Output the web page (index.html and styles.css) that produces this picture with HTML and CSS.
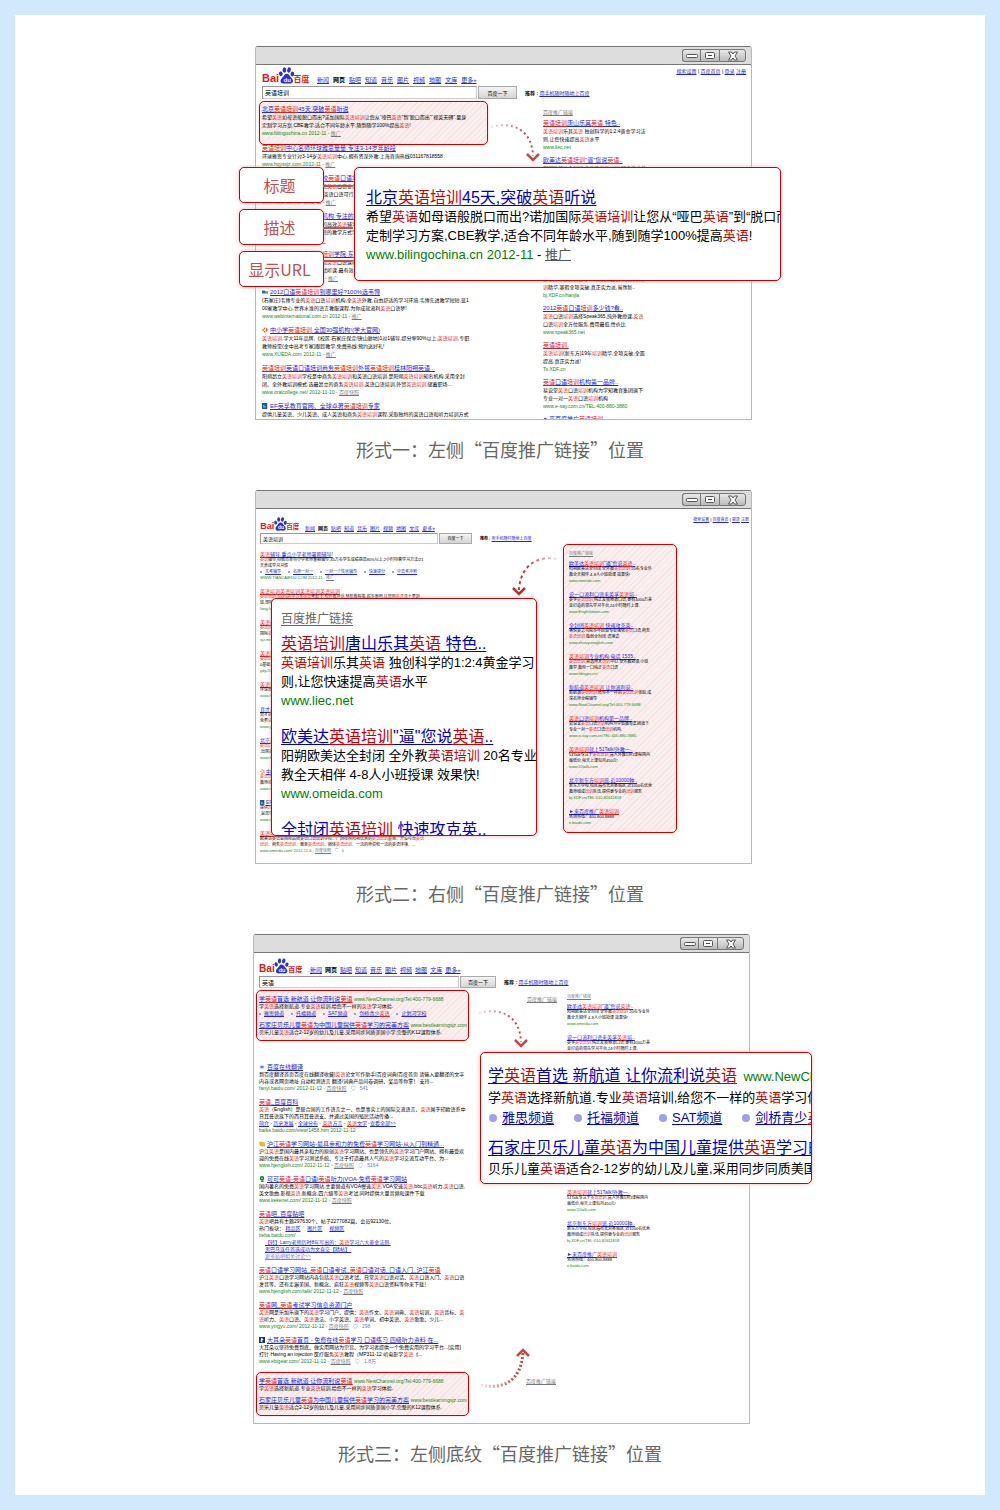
FILE: index.html
```html
<!DOCTYPE html>
<html lang="zh-CN">
<head>
<meta charset="utf-8">
<title>百度推广链接位置</title>
<link rel="stylesheet" href="styles.css">
</head>
<body>
<svg class="defs" aria-hidden="true">
  <defs>
    <symbol id="logo" viewBox="0 0 48 17">
      <text x="0" y="15" class="logo-latin">Bai</text>
      <g fill="#2a30d8">
        <ellipse cx="18.800" cy="6.800" rx="1.800" ry="2.400" transform="rotate(-15 18.8 6.8)"/>
        <ellipse cx="22.400" cy="3" rx="1.800" ry="2.700"/>
        <ellipse cx="27" cy="3" rx="1.800" ry="2.700" transform="rotate(12 27 3)"/>
        <ellipse cx="30.400" cy="7" rx="1.800" ry="2.400" transform="rotate(15 30.4 7)"/>
        <path d="M24.700 6.800c2.200 0 3 2.200 4.200 3.600 1.400 1.400 2.400 2.300 2 4.200-.4 1.700-1.800 2.100-3.300 2-2-.1-3.800-.1-5.800 0-1.500.1-2.900-.4-3.200-2.100-.3-1.900.9-2.800 2.100-4.200 1.300-1.300 1.900-3.500 4-3.500z"/>
      </g>
      <text x="21.500" y="15" class="logo-du">du</text>
      <text x="31.500" y="15" class="logo-han">百度</text>
    </symbol>
    <symbol id="win-min" viewBox="0 0 14 8"><rect x="1.500" y="2.500" width="11" height="3" rx="1" fill="#fff" stroke="#555"/></symbol>
    <symbol id="win-max" viewBox="0 0 14 8"><rect x="2.500" y=".5" width="9" height="6" rx="1" fill="#fff" stroke="#555"/><path d="M5 3.500h4" stroke="#444"/></symbol>
    <symbol id="win-close" viewBox="0 0 14 10"><path d="M2.500 1h3L7 3l1.500-2h3L9 5l2.500 4h-3L7 7 5.500 9h-3L5 5z" fill="#fff" stroke="#555"/></symbol>
    <linearGradient id="fade-right" x1="0" x2="1"><stop offset="0" stop-color="#c04848" stop-opacity=".15"/><stop offset=".8" stop-color="#c04848"/></linearGradient>
    <linearGradient id="fade-left" x1="1" x2="0"><stop offset="0" stop-color="#b84040" stop-opacity=".15"/><stop offset=".8" stop-color="#b84040"/></linearGradient>
    <symbol id="arrow-down" viewBox="0 0 52 42">
      <path d="M2 5C24-1 43 8 44 34" fill="none" stroke="url(#fade-right)" stroke-width="2" stroke-dasharray="2 3"/>
      <path d="M38 32l6 6 6-6" fill="none" stroke="#c04848" stroke-width="2.500"/>
    </symbol>
    <symbol id="arrow-down-left" viewBox="0 0 52 42">
      <path d="M46 3C24-1 9 12 8 34" fill="none" stroke="url(#fade-left)" stroke-width="2" stroke-dasharray="3 3"/>
      <path d="M2 32l6 6 6-6" fill="none" stroke="#b03030" stroke-width="2.500"/>
    </symbol>
    <symbol id="arrow-up" viewBox="0 0 52 42">
      <path d="M2 38c22 5 40-4 42-32" fill="none" stroke="url(#fade-right)" stroke-width="3" stroke-dasharray="2 2"/>
      <path d="M38 9l6-6 6 6" fill="none" stroke="#c04848" stroke-width="2.500"/>
    </symbol>
  </defs>
</svg>

<main class="page">

<figure class="figure">
  <div class="scene">
    <section class="window mini mini-large">
      <header class="titlebar">
        <button aria-label="最小化"><svg><use href="#win-min"/></svg></button>
        <button aria-label="最大化"><svg><use href="#win-max"/></svg></button>
        <button aria-label="关闭"><svg><use href="#win-close"/></svg></button>
      </header>
      <div class="site-head">
        <svg class="logo" role="img" aria-label="Baidu百度"><use href="#logo"/></svg>
        <nav><a href="#">新闻</a><b>网页</b><a href="#">贴吧</a><a href="#">知道</a><a href="#">音乐</a><a href="#">图片</a><a href="#">视频</a><a href="#">地图</a><a href="#">文库</a><a href="#">更多»</a></nav>
        <p class="account"><a href="#">搜索设置</a> | <a href="#">百度首页</a> | <a href="#">登录</a> <a href="#">注册</a></p>
      </div>
      <form class="search"><input type="text" aria-label="搜索" value="英语培训"><button type="button">百度一下</button><p><b>推荐 : </b><a href="#">用手机随时随地上百度</a></p></form>
      <div class="columns">
        <div class="results">
          <div class="marked">
            <article><h3><a href="#">北京<em>英语培训</em>45天,突破<em>英语</em>听说</a></h3>
            <p>希望<em>英语</em>如母语般脱口而出?诺加国际<em>英语培训</em>让您从“哑巴<em>英语</em>”到“脱口而出”“视英无碍”.量身<br>定制学习方案,CBE教学,适合不同年龄水平,随到随学100%提高<em>英语</em>!</p>
            <cite>www.bilingochina.cn 2012-11 - <u>推广</u></cite></article>
          </div>
          <article><h3><a href="#"><em>英语培训</em>中心名师环球雅思量量.专注3-14岁年龄段</a></h3>
          <p>环球雅思专业针对3-14岁<em>英语培训</em>中心,拥有资深外教.上海咨询热线031167818558</p>
          <cite>www.hqyssjz.com 2012-11 - <u>推广</u></cite></article>
          <article><h3><a href="#">唐山新东方<em>英语培训</em>学校<em>英语</em>口语培训班</a></h3>
          <p>唐山新东方学校专业英语口语<em>英语</em>口语业务英语培训,小班授课<br>名师教学,轻松愉快学习地道英语口语可行试听</p>
          <cite>www.tsxdf.com.cn 2012-11 - <u>推广</u></cite></article>
          <article><h3><a href="#">石家庄最好的<em>英语培训</em>机构.专注的教育专家</a></h3>
          <p>专业口语<em>培训</em>机构小班授课的高效<em>英语</em>辅导最全面课程,全外教<br>教学零基础可以学好英语口语的教学方式学生好</p>
          <cite>www.yysjz.cn 2012-11 - <u>推广</u></cite></article>
          <article><h3><a href="#">学<em>英语</em>就来新东方<em>英语培训</em>学院.东方实力</a></h3>
          <p>新东方英语专家团队精心打造<em>英语</em>口语课程<em>英语培训</em>名师<br>授课全程跟踪<em>英语培训</em>免费试听课,最有效提高</p>
          <cite>www.sjzxdf.com.cn 2012-11 - <u>推广</u></cite></article>
          <article><h3><svg class="fav" viewBox="0 0 8 8"><path d="M0 2h4v4H0z" fill="#2a70a0"/><path d="M4 3h4v3H4z" fill="#5aa040"/></svg><a href="#">2012口语<em>英语培训</em>到哪里好?100%选韦博</a></h3>
          <p>(石家庄)韦博专业的<em>英语</em>口语<em>培训</em>机构,全<em>英语</em>外教,自由舒适的学习环境,韦博先进教学短短,蓝1<br>00家教学中心,世界水准的语言教服课程,为你成就流利<em>英语</em>口语梦!</p>
          <cite>www.webinternational.com.cn 2012-11 - <u>推广</u></cite></article>
          <article><h3><svg class="fav" viewBox="0 0 8 8"><circle cx="4" cy="4" r="2.500" fill="none" stroke="#e86030" stroke-width="2" stroke-dasharray="2 1"/></svg><a href="#">中小学<em>英语培训</em>,全国30强机构!(学大官网)</a></h3>
          <p><em>英语培训</em>,学大11年品牌,《校区:石家庄保定/唐山廊坊)1对1辅导,提分率90%以上,<em>英语培训</em>,专职<br>教师按需(金中高考专家)跟踪教学,免费热线:预约送好礼!</p>
          <cite>www.XUEDA.com 2012-11 - <u>推广</u></cite></article>
          <article><h3><a href="#"><em>英语培训</em>英语口语培训商务<em>英语培训</em>外贸<em>英语培训</em>桂林阳朔英语...</a></h3>
          <p>阳朔昂立<em>英语培训</em>学校是中商务<em>英语培训</em>和英语口语培训.是阳朔<em>英语培训</em>知名机构.采用全封<br>闭、全外教培训模式.选最昂立的商务<em>英语培训</em>,英语口语培训,外贸<em>英语培训</em>,储蓄职场...</p>
          <cite>www.oralcollege.net/ 2012-11-10 - <u>百度快照</u></cite></article>
          <article><h3><svg class="fav" viewBox="0 0 8 8"><rect width="7" height="8" fill="#2050b0"/><path d="M1 2l5 3-4 2z" fill="#50c0a0"/></svg><a href="#">EF英孚教育官网、全球卓著<em>英语培训</em>专家</a></h3>
          <p>提供儿童英语、少儿英语、成人英语和商务<em>英语培训</em>课程,采取独特的英语口语和听力培训方式<br>,是您学习英语的首选<em>英语培训</em>机构、欢迎您到EF英孚教育网站寻找免费试听课程.</p></article>
        </div>
        <aside class="ads">
          <p class="ads-label"><a href="#">百度推广链接</a></p>
          <article><h3><a href="#"><em>英语培训</em>唐山乐其<em>英语</em> 特色..</a></h3><p><em>英语培训</em>乐其<em>英语</em> 独创科学的1:2:4黄金学习法<br>则,让您快速提高<em>英语</em>水平</p><cite>www.liec.net</cite></article>
          <article><h3><a href="#">欧美达<em>英语培训</em>"逼"您说<em>英语</em>..</a></h3><p>阳朔欧美达全封闭 全外教<em>英语培训</em> 20名专业外<br>教全天相伴 4-8人小班授课 效果快!</p><cite>www.omeida.com</cite></article>
          <article><h3><a href="#">全封闭<em>英语培训</em> 快速攻克英..</a></h3><p>睿悦英之书院多年经验专业强化<em>英语</em>口语,商务<br><em>英语培训</em>,独创全封闭.语境式</p><cite>www.zhuoyuenglish.com</cite></article>
          <article><h3><a href="#"><em>英语培训</em>专业机构.电话 1535..</a></h3><p><em>英语培训</em>,首选师大<em>培训</em>中心.全外教授课,小班<br>教学,教你一口纯正<em>英语</em>口语</p><cite>www.hbsypx.cn/</cite></article>
          <article><h3><a href="#">新东方<em>英语培训</em> 轻松学<em>英语</em>..</a></h3><p>新东方专业<em>英语</em>辅导19年培训,口语听力<em>英语培</em><br><em>训</em>精华,寒假全项突破,真正实力派,当然新..</p><cite>bj.XDF.cn/hanjia</cite></article>
          <article><h3><a href="#">2012<em>英语</em>口语<em>培训</em>多少钱?看..</a></h3><p><em>英语</em>口语<em>培训</em>选择Speak365,纯外教授课,<em>英语</em><br>口语<em>培训</em>全方位服务,费用最低,性价比</p><cite>www.speak365.net</cite></article>
          <article><h3><a href="#"><em>英语培训</em>.</a></h3><p><em>英语培训</em>(新东方)19年<em>培训</em>精华,全项突破,全面<br>提高,真正实力派!</p><cite>Ts.XDF.cn</cite></article>
          <article><h3><a href="#"><em>英语</em>口语<em>培训</em>机构第一品牌..</a></h3><p>易说堂<em>英语</em>口语<em>培训</em>机构为学知教育集团旗下<br>专业一对一<em>英语</em>口语<em>培训</em>机构</p><cite>www.e-say.com.cn/TEL:400-880-3880</cite></article>
          <article><h3><a href="#">►来百度推广<em>英语培训</em></a></h3></article>
        </aside>
      </div>
    </section>
    <ul class="tags"><li>标题</li><li>描述</li><li>显示URL</li></ul>
    <svg class="arrow arrow-one" aria-hidden="true"><use href="#arrow-down"/></svg>
    <div class="callout callout-one">
      <h3><a href="#">北京<em>英语培训</em>45天,突破<em>英语</em>听说</a></h3>
      <p>希望<em>英语</em>如母语般脱口而出?诺加国际<em>英语培训</em>让您从“哑巴<em>英语</em>”到“脱口而出”</p>
      <p>定制学习方案,CBE教学,适合不同年龄水平,随到随学100%提高<em>英语</em>!</p>
      <cite>www.bilingochina.cn 2012-11 <span>- <u>推广</u></span></cite>
    </div>
  </div>
  <figcaption>形式一：左侧“百度推广链接”位置</figcaption>
</figure>

<figure class="figure">
  <div class="scene">
    <section class="window mini mini-small">
      <header class="titlebar">
        <button aria-label="最小化"><svg><use href="#win-min"/></svg></button>
        <button aria-label="最大化"><svg><use href="#win-max"/></svg></button>
        <button aria-label="关闭"><svg><use href="#win-close"/></svg></button>
      </header>
      <div class="site-head">
        <svg class="logo" role="img" aria-label="Baidu百度"><use href="#logo"/></svg>
        <nav><a href="#">新闻</a><b>网页</b><a href="#">贴吧</a><a href="#">知道</a><a href="#">音乐</a><a href="#">图片</a><a href="#">视频</a><a href="#">地图</a><a href="#">文库</a><a href="#">更多»</a></nav>
        <p class="account"><a href="#">搜索设置</a> | <a href="#">百度首页</a> | <a href="#">登录</a> <a href="#">注册</a></p>
      </div>
      <form class="search"><input type="text" aria-label="搜索" value="英语培训"><button type="button">百度一下</button><p><b>推荐 : </b><a href="#">用手机随时随地上百度</a></p></form>
      <div class="columns">
        <div class="results">
          <article><h3><a href="#"><em>英语</em>辅导,重点小学老师暑期辅导!</a></h3>
          <p><em>英语</em>辅导,特聘市重点小学老师暑期辅导,35万名学生成绩提高80%以上,2小时特惠学习方法/21<br>天养成学习习惯</p>
          <p class="sublinks"><a href="#">艺考辅导</a><a href="#">名师一对一</a><a href="#">一对一个性化辅导</a><a href="#">快速提分</a><a href="#">中高考冲刺</a></p>
          <cite>WWW.TIANCAIEDU.COM 2012-11 - <u>推广</u></cite></article>
          <article><h3><a href="#"><em>英语培训英语培训英语培训英语培训</em></a></h3>
          <p><em>英语培训</em>,100%的学员亲<em>英语</em>零起步,和外教对话,轻松教程策,超多案例,让您用<em>英语</em>流十里到<br>班,想听就听,免费试听</p><cite>lang.hb.cn 2012-11</cite></article>
          <article><h3><a href="#"><em>英语</em>口语培训机构</a></h3><p><em>英语培训</em>首选名师课程<br>国际<em>英语</em>教学</p><cite>sjz.meten.com</cite></article>
          <article><h3><a href="#"><em>英语培训</em>学校</a></h3><p><em>英语培训</em>名师授课<br>0基础英语</p><cite>ydy.20on.com</cite></article>
          <article><h3><a href="#"><em>英语培训</em></a></h3><p>环球雅思英语</p><cite>www.hqys.com</cite></article>
          <article><h3><a href="#">育才<em>英语</em></a></h3><p>育才英语培训学校<br>免费试听课</p><cite>www.yucai.com</cite></article>
          <article><h3><a href="#">北京<em>英语培训</em></a></h3><p><em>英语</em>口语培训<br>,出国英语</p><cite>www.bjyy.com</cite></article>
          <article><h3><svg class="fav" viewBox="0 0 8 8"><circle cx="4" cy="4" r="2.500" fill="none" stroke="#e88030" stroke-width="2" stroke-dasharray="2 1"/></svg><a href="#">中小学<em>英语</em></a></h3><p><em>英语培训</em>学大<br>教师按需</p><cite>www.xueda.com</cite></article>
          <article><h3><svg class="fav" viewBox="0 0 8 8"><rect width="7" height="8" fill="#2050b0"/><path d="M1 2l5 3-4 2z" fill="#50c0a0"/></svg><a href="#">EF英孚教育</a></h3><p>提供儿童英语<br>,是您学习</p><cite>www.ef.com.cn</cite></article>
          <article><h3><a href="#"><em>英语培训</em>英语口语培训商务<em>英语培训</em>外贸<em>英语培训</em>阳朔<em>英语培训</em>...</a></h3>
          <p>欧美达英语是国际品牌英语口语培训学校、广西桂林阳朔优秀的<em>英语培训</em>基地、开设综合<em>英语</em><br><em>培训</em>、商务<em>英语培训</em>、雅思<em>英语培训</em>、团体<em>英语培训</em>、一流的师资和一流的英语环境、...</p>
          <cite>www.omeida.com/ 2012-11-6 - <u>百度快照</u> &nbsp; <span class="like">♡ &nbsp; 6</span></cite></article>
        </div>
        <aside class="ads marked">
          <p class="ads-label"><a href="#">百度推广链接</a></p>
          <article><h3><a href="#">欧美达<em>英语培训</em>"逼"您说<em>英语</em>..</a></h3><p>阳朔欧美达全封闭 全外教<em>英语培训</em> 20名专业外<br>教全天相伴 4-8人小班授课 效果快!</p><cite>www.omeida.com</cite></article>
          <article><h3><a href="#">说一口流利口语来英孚<em>英语</em>培..</a></h3><p>英孚<em>英语培训</em>,纯正发展地道口语,更有4000万美<br>金打造的领先学习平台,24小时随时上课.</p><cite>www.Englishtown.com</cite></article>
          <article><h3><a href="#">全封闭<em>英语培训</em> 快速攻克英..</a></h3><p>睿悦英之书院多年经验专业强化<em>英语</em>口语,商务<br><em>英语培训</em>,独创全封闭.语境式</p><cite>www.zhuoyuenglish.com</cite></article>
          <article><h3><a href="#"><em>英语培训</em>专业机构.电话 1535..</a></h3><p><em>英语培训</em>,首选师大<em>培训</em>中心.全外教授课,小班<br>教学,教你一口纯正<em>英语</em>口语</p><cite>www.hbsypx.cn/</cite></article>
          <article><h3><a href="#">新航道<em>英语培训</em> 让你流利说..</a></h3><p>新航道<em>英语培训</em>,给你不一样的<em>英语培训</em>体验,成<br>深名师全程辅导</p><cite>www.NewChannel.org/Tel:400-779-6688</cite></article>
          <article><h3><a href="#"><em>英语</em>口语<em>培训</em>机构第一品牌..</a></h3><p>易说堂<em>英语</em>口语<em>培训</em>机构为学知教育集团旗下<br>专业一对一<em>英语</em>口语<em>培训</em>机构.</p><cite>www.e-say.com.cn/TEL:400-880-3880</cite></article>
          <article><h3><a href="#"><em>英语培训</em>就上51Talk!外教一..</a></h3><p>51Talk专注于<em>英语培训</em>,真人外教1对1课程国内<br>最低价,每天上课包月450元!</p><cite>www.51talk.com</cite></article>
          <article><h3><a href="#">北京新东方<em>培训</em>班,近10000种..</a></h3><p>新东方学校,校区遍布北京各城区,近1000名优秀<br>教师组成<em>培训</em>队伍,提供更专业的<em>培训</em>服务</p><cite>bj.XDF.cn/TEL:010-82611818</cite></article>
          <article><h3><a href="#">►来百度推广<em>英语培训</em></a></h3><p>咨询热线：400-800-8888</p><cite>e.baidu.com</cite></article>
        </aside>
      </div>
    </section>
    <svg class="arrow arrow-two" aria-hidden="true"><use href="#arrow-down-left"/></svg>
    <div class="callout callout-two">
      <p class="callout-label"><a href="#">百度推广链接</a></p>
      <article><h3><a href="#"><em>英语培训</em>唐山乐其<em>英语</em> 特色..</a></h3><p><em>英语培训</em>乐其<em>英语</em> 独创科学的1:2:4黄金学习</p><p>则,让您快速提高<em>英语</em>水平</p><cite>www.liec.net</cite></article>
      <article><h3><a href="#">欧美达<em>英语培训</em>"逼"您说<em>英语</em>..</a></h3><p>阳朔欧美达全封闭 全外教<em>英语培训</em> 20名专业外</p><p>教全天相伴 4-8人小班授课 效果快!</p><cite>www.omeida.com</cite></article>
      <article><h3><a href="#">全封闭<em>英语培训</em> 快速攻克英..</a></h3></article>
    </div>
  </div>
  <figcaption>形式二：右侧“百度推广链接”位置</figcaption>
</figure>

<figure class="figure">
  <div class="scene scene-tall">
    <section class="window mini mini-medium">
      <header class="titlebar">
        <button aria-label="最小化"><svg><use href="#win-min"/></svg></button>
        <button aria-label="最大化"><svg><use href="#win-max"/></svg></button>
        <button aria-label="关闭"><svg><use href="#win-close"/></svg></button>
      </header>
      <div class="site-head">
        <svg class="logo" role="img" aria-label="Baidu百度"><use href="#logo"/></svg>
        <nav><a href="#">新闻</a><b>网页</b><a href="#">贴吧</a><a href="#">知道</a><a href="#">音乐</a><a href="#">图片</a><a href="#">视频</a><a href="#">地图</a><a href="#">文库</a><a href="#">更多»</a></nav>
      </div>
      <form class="search"><input type="text" aria-label="搜索" value="英语"><button type="button">百度一下</button><p><b>推荐 : </b><a href="#">用手机随时随地上百度</a></p></form>
      <div class="columns">
        <div class="results">
          <div class="marked">
            <article><h3><a href="#">学<em>英语</em>首选 新航道 让你流利说<em>英语</em></a> <cite>www.NewChannel.org/Tel:400-779-6688</cite></h3>
            <p>学<em>英语</em>选择新航道.专业<em>英语</em>培训,给您不一样的<em>英语</em>学习体验.</p>
            <p class="sublinks"><a href="#">雅思频道</a><a href="#">托福频道</a><a href="#">SAT频道</a><a href="#">剑桥青少<em>英语</em></a><a href="#">企划河学校</a></p></article>
            <article><h3><a href="#">石家庄贝乐儿童<em>英语</em>为中国儿童提供<em>英语</em>学习的完美方案</a> <cite>www.bestlearningsjz.com</cite></h3>
            <p>贝乐儿童<em>英语</em>适合2-12岁的幼儿及儿童,采用同步同质美国小学,完整的K12课程体系.</p></article>
          </div>
          <article><h3><svg class="fav" viewBox="0 0 8 8"><rect x="1" y="1" width="6" height="6" fill="#d0e0f8"/><path d="M2 3h4v2H2z" fill="#3868d0"/></svg><a href="#">百度在线翻译</a></h3>
          <p>到百度翻译首页百度在线翻译收藏|<em>英语</em>论文写作助手|百度词典|百度首页 请输入要翻译的文字<br>内容或者网页地址 自动检测语言 翻译/词典产品问卷调研、奖品等你拿！ 支持...</p>
          <cite>fanyi.baidu.com/ 2012-11-12 - <u>百度快照</u> &nbsp; <span class="like">♡ &nbsp; 541</span></cite></article>
          <article><h3><a href="#"><em>英语</em>_百度百科</a></h3>
          <p><em>英语</em>（English）是联合国的工作语言之一、也是事实上的国际交流语言、<em>英语</em>属于印欧语系中<br>日耳曼语族下的西日耳曼语支、并通过英国的殖民活动传播...</p>
          <p><a href="#">简介</a> - <a href="#">历史发展</a> - <a href="#">全球分布</a> - <a href="#"><em>英语</em>方言</a> - <a href="#"><em>英语</em>文学</a> -<a href="#">查看全部&gt;&gt;</a></p>
          <cite>baike.baidu.com/view/1458.htm 2012-11-12</cite></article>
          <article><h3><svg class="fav" viewBox="0 0 8 8"><path d="M0 1h5l3 2v4H1z" fill="#e8b820"/></svg><a href="#">沪江<em>英语</em>学习网站-最具亲和力的免费<em>英语</em>学习网站-从入门到精通...</a></h3>
          <p>沪江<em>英语</em>是国内最具亲和力的原创<em>英语</em>学习网站、也是领先的<em>英语</em>学习门户网站、拥有最受欢<br>迎的免费在线<em>英语</em>学习测试系统、专注于打造最具人气的<em>英语</em>学习交流互动平台、为...</p>
          <cite>www.hjenglish.com/ 2012-11-12 - <u>百度快照</u> &nbsp; <span class="like">♡ &nbsp; 5164</span></cite></article>
          <article><h3><svg class="fav" viewBox="0 0 8 8"><circle cx="4" cy="3" r="2" fill="none" stroke="#187838" stroke-width="2"/><path d="M3 6h3v2H3z" fill="#187838"/></svg><a href="#">可可<em>英语</em>-<em>英语</em>口语|<em>英语</em>听力|VOA-免费<em>英语</em>学习网站</a></h3>
          <p>国内著名的免费<em>英语</em>学习网站,主要频道有VOA慢速<em>英语</em>,VOA常速<em>英语</em>,bbc<em>英语</em>听力,<em>英语</em>口语,<br>英文歌曲,影视<em>英语</em>,新概念,四六级等<em>英语</em>考试,同时提供大量音频和课件下载</p>
          <cite>www.kekenet.com/ 2012-11-12 - <u>百度快照</u></cite></article>
          <article><h3><a href="#"><em>英语</em>吧_百度贴吧</a></h3>
          <p><em>英语</em>吧共有主题297630个、帖子2277082篇、会员92130位、<br>热门板块： <a href="#">精品区</a> &nbsp; &nbsp; <a href="#">图片区</a> &nbsp; &nbsp; <a href="#">视频区</a></p>
          <cite>tieba.baidu.com/</cite>
          <p class="threads"><a href="#">【转】Larry老师历时8年写出的：<em>英语</em>学习六大黄金法则.</a><br><a href="#">男巴马连任首选成功为文直交【精帖】.</a><br><a class="more" href="#">更多贴吧相关讨论&gt;&gt;</a></p></article>
          <article><h3><a href="#"><em>英语</em>口语学习网站_<em>英语</em>口语考试_<em>英语</em>口语对话_口语入门_沪江<em>英语</em></a></h3>
          <p>沪江<em>英语</em>口语学习网站内容包括<em>英语</em>口语考试、日常<em>英语</em>口语对话、<em>英语</em>口语入门、<em>英语</em>口语<br>发音等、还有走遍美国、新概念、疯狂<em>英语</em>视频等<em>英语</em>口语资料等你来下载！</p>
          <cite>www.hjenglish.com/talk/ 2012-11-12 - <u>百度快照</u></cite></article>
          <article><h3><a href="#"><em>英语</em>网_<em>英语</em>考试学习信息资源门户</a></h3>
          <p><em>英语</em>网是乐加乐旗下的<em>英语</em>学习门户、提供：<em>英语</em>作文、<em>英语</em>词典、<em>英语</em>培训、<em>英语</em>音标、<em>英</em><br><em>语</em>听力、<em>英语</em>口语、<em>英语</em>语法、小学英语、<em>英语</em>单词、初中英语、<em>英语</em>歌歌、少儿...</p>
          <cite>www.yingyu.com/ 2012-11-12 - <u>百度快照</u> &nbsp; <span class="like">♡ &nbsp; 298</span></cite></article>
          <article><h3><svg class="fav" viewBox="0 0 8 8"><rect width="8" height="8" fill="#183868"/><path d="M3 1l3 2-2 2 1 2-3-1z" fill="#fff"/></svg><a href="#">大耳朵<em>英语</em>首页 - 免费在线<em>英语</em>学习 口语练习 四级听力资料 在...</a></h3>
          <p>大耳朵以坚持免费到底、做实用网站为宗旨、为学习者提供一个免费实用的学习平台...[实用]<br>打针 Having an injection 医疗服务<em>英语</em>教程（MP311-12 听电影学<em>英语</em>《...</p>
          <cite>www.ebigear.com/ 2012-11-12 - <u>百度快照</u> &nbsp; <span class="like">♡ &nbsp; 1.8万</span></cite></article>
          <div class="marked">
            <article><h3><a href="#">学<em>英语</em>首选 新航道 让你流利说<em>英语</em></a> <cite>www.NewChannel.org/Tel:400-779-6688</cite></h3>
            <p>学<em>英语</em>选择新航道.专业<em>英语</em>培训,给您不一样的<em>英语</em>学习体验.</p></article>
            <article><h3><a href="#">石家庄贝乐儿童<em>英语</em>为中国儿童提供<em>英语</em>学习的完美方案</a> <cite>www.bestlearningsjz.com</cite></h3>
            <p>贝乐儿童<em>英语</em>适合2-12岁的幼儿及儿童,采用同步同质美国小学,完整的K12课程体系.</p></article>
          </div>
        </div>
        <div class="notes"><a href="#">百度推广链接</a><a href="#">百度推广链接</a></div>
        <aside class="ads">
          <p class="ads-label"><a href="#">百度推广链接</a></p>
          <article><h3><a href="#">欧美达<em>英语培训</em>"逼"您说<em>英语</em>..</a></h3><p>阳朔欧美达全封闭 全外教<em>英语培训</em> 20名专业外<br>教全天相伴 4-8人小班授课 效果快!</p><cite>www.omeida.com</cite></article>
          <article><h3><a href="#">说一口流利口语来英孚<em>英语</em>培..</a></h3><p>英孚<em>英语培训</em>,纯正发展地道口语,更有4000万美<br>金打造的领先学习平台,24小时随时上课.</p><cite>www.Englishtown.com</cite></article>
          <article><h3><a href="#">全封闭<em>英语培训</em> 快速攻克英..</a></h3><p>睿悦英之书院多年经验专业强化<em>英语</em>口语,商务<br><em>英语培训</em>,独创全封闭.语境式</p><cite>www.zhuoyuenglish.com</cite></article>
          <article><h3><a href="#"><em>英语培训</em>专业机构.电话 1535..</a></h3><p><em>英语培训</em>,首选师大<em>培训</em>中心.全外教授课,小班<br>教学,教你一口纯正<em>英语</em>口语</p><cite>www.hbsypx.cn/</cite></article>
          <article><h3><a href="#">新航道<em>英语培训</em> 让你流利说..</a></h3><p>新航道<em>英语培训</em>,给你不一样的<em>英语培训</em>体验,成<br>深名师全程辅导</p><cite>www.NewChannel.org/Tel:400-779-6688</cite></article>
          <article><h3><a href="#"><em>英语</em>口语<em>培训</em>机构第一品牌..</a></h3><p>易说堂<em>英语</em>口语<em>培训</em>机构为学知教育集团旗下<br>专业一对一<em>英语</em>口语<em>培训</em>机构.</p><cite>www.e-say.com.cn/TEL:400-880-3880</cite></article>
          <article><h3><a href="#"><em>英语培训</em>就上51Talk!外教一..</a></h3><p>51Talk专注于<em>英语培训</em>,真人外教1对1课程国内<br>最低价,每天上课包月450元!</p><cite>www.51talk.com</cite></article>
          <article><h3><a href="#">北京新东方<em>培训</em>班,近10000种..</a></h3><p>新东方学校,校区遍布北京各城区,近1000名优秀<br>教师组成<em>培训</em>队伍,提供更专业的<em>培训</em>服务</p><cite>bj.XDF.cn/TEL:010-82611818</cite></article>
          <article><h3><a href="#">►来百度推广<em>英语培训</em></a></h3><p>咨询热线：400-800-8888</p><cite>e.baidu.com</cite></article>
        </aside>
      </div>
    </section>
    <svg class="arrow arrow-three" aria-hidden="true"><use href="#arrow-down"/></svg>
    <svg class="arrow arrow-four" aria-hidden="true"><use href="#arrow-up"/></svg>
    <div class="callout callout-three">
      <h3><a href="#">学<em>英语</em>首选 新航道 让你流利说<em>英语</em></a> <cite>www.NewChannel.org</cite></h3>
      <p>学<em>英语</em>选择新航道.专业<em>英语</em>培训,给您不一样的<em>英语</em>学习体验.</p>
      <p class="sublinks"><a href="#">雅思频道</a><a href="#">托福频道</a><a href="#">SAT频道</a><a href="#">剑桥青少<em>英语</em></a></p>
      <h3><a href="#">石家庄贝乐儿童<em>英语</em>为中国儿童提供<em>英语</em>学习的完美方案</a></h3>
      <p>贝乐儿童<em>英语</em>适合2-12岁的幼儿及儿童,采用同步同质美国小学</p>
    </div>
  </div>
  <figcaption>形式三：左侧底纹“百度推广链接”位置</figcaption>
</figure>

</main>
</body>
</html>
```

FILE: styles.css
```css
:root {
  --link: #0000cc;
  --red: #cc0000;
  --green: #008000;
  --tint: #c05050;
}

* { box-sizing: border-box; }

body {
  margin: 0;
  background: #fff;
  border: 15px solid #d2e8fd;
  font-family: "Liberation Sans", "Noto Sans CJK SC", sans-serif;
  color: #000;
}

h3, p, ul, figure { margin: 0; padding: 0; }
h3 { font-weight: 400; }
em, cite { font-style: normal; }
a { color: var(--link); text-decoration: underline; }
em { color: var(--red); }
a em { text-decoration: underline; }
cite { color: var(--green); }
button { padding: 0; }

.defs { position: absolute; width: 0; height: 0; }
.logo-latin { font: bold 11px "Liberation Sans", sans-serif; fill: #e01818; }
.logo-han { font: bold 8px "Noto Sans CJK SC", sans-serif; fill: #e01818; }
.logo-du { font: bold 6px "Liberation Sans", sans-serif; fill: #fff; }

.page { padding: 31px 0 1px; }

.figure {
  display: flex;
  flex-direction: column;
  align-items: center;
}

figcaption {
  line-height: 58px;
  padding-bottom: 12px;
  font-family: "Noto Sans CJK SC", sans-serif;
  font-size: 18px;
  color: #666;
}

.scene {
  position: relative;
  width: 497px;
  margin-left: 7px;
}
.scene-tall { margin-left: 3px; }

/* browser window */
.window {
  height: 374px;
  overflow: hidden;
  border: 1px solid #b8b8b8;
  border-top-color: #777;
  border-radius: 3px 3px 0 0;
  white-space: nowrap;
}
.scene-tall .window { height: 490px; }

.titlebar {
  display: flex;
  justify-content: flex-end;
  height: 18px;
  padding: 2px 5px 2px 0;
  background: #dedddd;
  border-bottom: 1px solid #777;
}
.titlebar button {
  display: flex;
  align-items: center;
  justify-content: center;
  width: 19px;
  border: 1px solid #777;
  border-right-width: 0;
  background: linear-gradient(#e8e8e8, #bbb);
}
.titlebar button:first-child { width: 18px; border-radius: 3px 0 0 3px; }
.titlebar button:last-child { width: 27px; border-right-width: 1px; border-radius: 0 3px 3px 0; }
.titlebar svg { width: 14px; height: 8px; }
.titlebar button:last-child svg { height: 10px; }

/* scaled-down search pages */
.mini-large {
  --title: 6px; --text: 5px; --nav: 6px; --line: 8px; --gap: 6px;
  --nav-gap: 4px; --head: 21px; --bar: 13px; --field: 215px; --go: 39px;
  --logo: 48px; --pad: 6px; --cols: 281px 1fr;
}
.mini-small {
  --title: 5px; --text: 4px; --nav: 5px; --line: 6px; --gap: 7px;
  --nav-gap: 3px; --head: 24px; --bar: 11px; --field: 178px; --go: 33px;
  --logo: 40px; --pad: 4px; --cols: 303px 114px;
}
.mini-medium {
  --title: 6px; --text: 5px; --nav: 6px; --line: 7px; --gap: 7px;
  --nav-gap: 3px; --head: 23px; --bar: 12px; --field: 200px; --go: 36px;
  --logo: 44px; --pad: 5px; --cols: 267px 41px 1fr;
}

.mini {
  --link: #2424d8;
  --green: #158a15;
  font-size: var(--text);
  line-height: var(--line);
}
.mini em { color: #dc2020; }
.mini a { text-underline-offset: 1px; }

.site-head {
  display: flex;
  align-items: flex-end;
  height: var(--head);
  padding: 0 5px 2px var(--pad);
}
.logo { width: var(--logo); height: 17px; }
.mini-small .logo { height: 14px; }
.mini-medium .logo { height: 16px; }
.site-head nav { display: flex; gap: var(--nav-gap); margin-left: 7px; font-size: var(--nav); }
.account { align-self: flex-start; margin-left: auto; padding-top: 2px; }
.mini-small .site-head { padding-right: 2px; }
.mini-small .account { padding-top: 8px; }
.mini-small nav { margin-left: 5px; }

.search { display: flex; align-items: center; height: var(--bar); padding-left: var(--pad); }
.search input {
  width: var(--field);
  height: 100%;
  margin-right: 1px;
  padding: 0 2px;
  border: 1px solid #ccc;
  border-top-color: #999;
  border-left-color: #999;
  font: inherit;
  font-size: var(--nav);
}
.search button {
  width: var(--go);
  height: 100%;
  border: 1px solid #aaa;
  background: linear-gradient(#f4f4f4, #d4d4d4);
  font: inherit;
}
.search p { margin-left: 8px; }

.columns { display: grid; grid-template-columns: var(--cols); align-items: start; padding-left: var(--pad); }
.mini article { margin-bottom: var(--gap); }
.mini h3 { font-size: var(--title); line-height: var(--line); }
.mini h3 cite { display: inline; font-size: var(--text); }
.mini cite { display: block; }
.mini u { color: #777; }
.fav { width: 6px; height: 6px; margin-right: 2px; vertical-align: -1px; }
.mini-small .fav { width: 5px; height: 5px; margin-right: 1px; }
.like { color: #6080c0; }
.mini .sublinks { display: flex; gap: 7px; }
.sublinks a::before {
  content: "";
  display: inline-block;
  width: 2px;
  height: 2px;
  margin-right: 3px;
  border-radius: 50%;
  background: #8080e0;
  vertical-align: middle;
}
.threads { padding-left: 6px; }
.threads .more { color: #8080d8; }
.ads-label { margin-bottom: 3px; }
.ads-label a, .notes a { color: #777; }

.marked {
  border: 1px solid var(--red);
  border-radius: 5px;
  background: repeating-linear-gradient(135deg, #faefef 0 3px, #f5e2e2 3px 4px);
  box-shadow: 0 0 3px #f0c8c8;
}
.mini .marked article:last-child { margin-bottom: 0; }

.mini-large .results .marked { width: 229px; margin: 2px 0 -1px -3px; padding: 3px 0 7px 2px; }
.mini-large .ads { padding-top: 9px; }
.mini-large .ads article { margin-bottom: 5px; }

.mini-small .results { padding-top: 7px; }
.mini-small .marked { padding: 6px 0 6px 5px; }

.mini-medium .results .marked { width: 213px; margin-left: -3px; padding: 5px 0 4px 2px; }
.mini-medium .results .marked:first-child { margin-top: 2px; margin-bottom: 23px; }
.mini-medium .marked article { margin-bottom: 5px; }
.mini-medium .notes {
  display: flex;
  flex-direction: column;
  align-self: stretch;
  justify-content: space-between;
  width: 31px;
  padding: 8px 0 31px;
}
.mini-medium .notes a:first-child { align-self: flex-end; }
.mini-medium .ads { --title: 5px; --text: 4px; --line: 6px; padding-top: 6px; font-size: var(--text); line-height: var(--line); }

/* enlarged excerpts laid over the windows */
.callout {
  position: absolute;
  overflow: hidden;
  border: 1px solid var(--red);
  border-radius: 5px;
  background: #fff;
  box-shadow: 0 0 4px #e8b8b8;
  font-size: 13px;
  line-height: 19px;
  white-space: nowrap;
}
.callout h3 { font-size: 16px; line-height: 19px; }
.callout a { text-underline-offset: 2px; }
.callout cite { display: block; }
.callout cite span { color: #000; }
.callout u { color: #555; }
.callout-one { left: 99px; top: 121px; width: 427px; padding: 20px 0 16px 11px; }
.callout-two { left: 16px; top: 108px; width: 266px; height: 238px; padding: 11px 0 0 9px; }
.callout-two article { margin-bottom: 17px; }
.callout-label { margin-bottom: 5px; font-size: 12px; }
.callout-label a { color: #666; }
.callout-three { left: 227px; top: 118px; width: 332px; padding: 12px 0 4px 7px; line-height: 20px; }
.callout-three h3 { line-height: 22px; }
.callout-three h3 cite { display: inline; margin-left: 2px; font-size: 13px; }
.callout-three .sublinks { display: flex; gap: 19px; margin-bottom: 10px; line-height: 19px; }
.callout-three .sublinks a::before { width: 8px; height: 8px; margin: 0 5px 2px 1px; background: #a0a0e8; }

.tags {
  position: absolute;
  left: -16px;
  top: 121px;
  display: grid;
  gap: 6px;
  list-style: none;
}
.tags li {
  position: relative;
  width: 85px;
  padding-right: 4px;
  border: 1px solid var(--red);
  border-radius: 5px;
  background: #fff;
  box-shadow: 0 0 4px #e8b8b8;
  color: var(--tint);
  font-family: "Noto Sans CJK SC", sans-serif;
  font-size: 16px;
  line-height: 34px;
  text-align: center;
}
.tags li::after {
  content: "";
  position: absolute;
  left: 100%;
  top: 50%;
  width: 30px;
  height: 2px;
  background: var(--tint);
}
.tags li:last-child::after { top: 8px; }

.arrow { position: absolute; width: 52px; height: 42px; }
.arrow-one { left: 234px; top: 76px; }
.arrow-two { left: 256px; top: 66px; }
.arrow-three { left: 224px; top: 74px; }
.arrow-four { left: 226px; top: 413px; }
```
